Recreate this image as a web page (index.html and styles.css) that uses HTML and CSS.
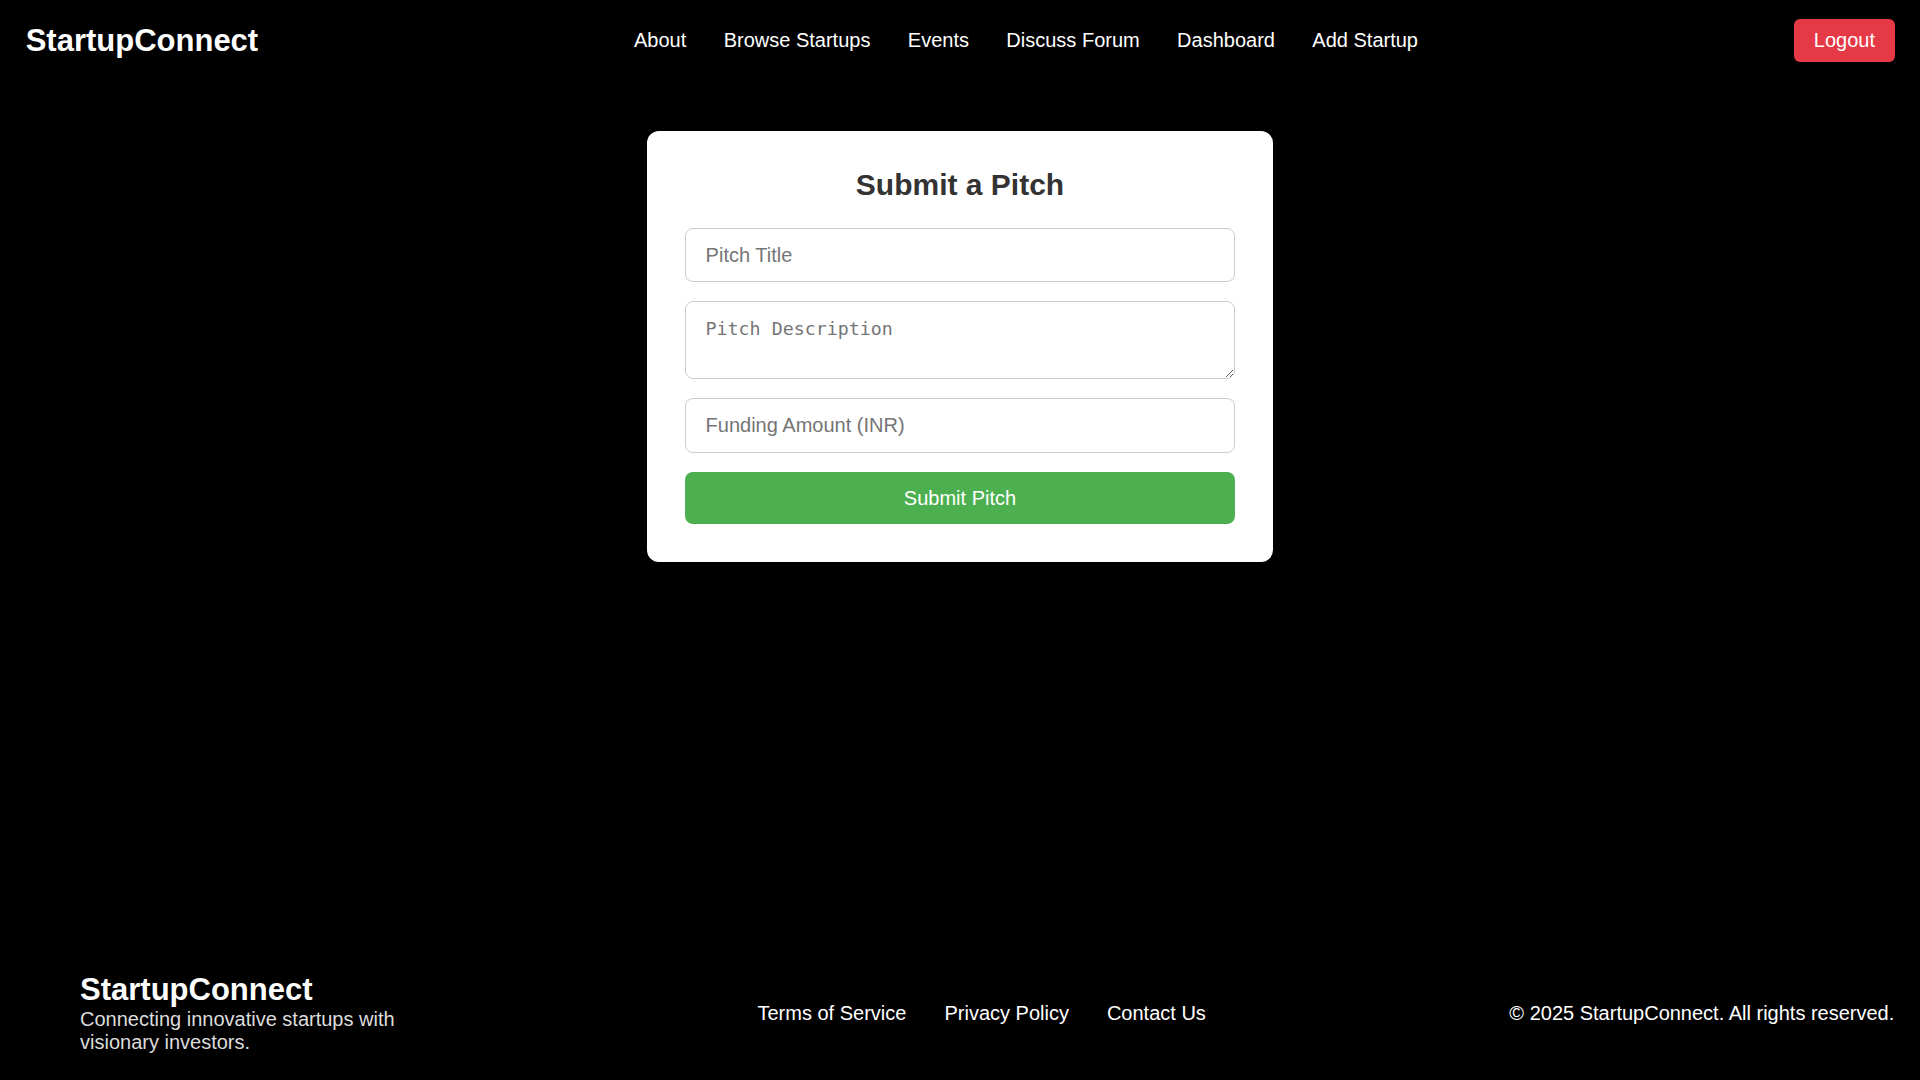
FILE: index.html
```html
<!DOCTYPE html>
<html lang="en">
<head>
<meta charset="UTF-8">
<title>Submit a Pitch - StartupConnect</title>
<link rel="stylesheet" href="styles.css">
</head>
<body>
  <header class="navbar">
    <div class="logo">StartupConnect</div>
    <nav class="nav-links">
      <a href="#">About</a>
      <a href="#">Browse Startups</a>
      <a href="#">Events</a>
      <a href="#">Discuss Forum</a>
      <a href="#">Dashboard</a>
      <a href="#">Add Startup</a>
    </nav>
    <button class="logout-btn" type="button">Logout</button>
  </header>

  <main class="main">
    <div class="pitch-card">
      <h2 class="pitch-title">Submit a Pitch</h2>
      <form class="pitch-form">
        <input class="field" type="text" placeholder="Pitch Title">
        <textarea class="field field-area" placeholder="Pitch Description"></textarea>
        <input class="field" type="number" placeholder="Funding Amount (INR)">
        <button class="submit-btn" type="button">Submit Pitch</button>
      </form>
    </div>
  </main>

  <footer class="footer">
    <div class="footer-brand">
      <div class="footer-logo">StartupConnect</div>
      <p class="footer-tagline">Connecting innovative startups with visionary investors.</p>
    </div>
    <div class="footer-links">
      <a href="#">Terms of Service</a>
      <a href="#">Privacy Policy</a>
      <a href="#">Contact Us</a>
    </div>
    <div class="footer-copy">© 2025 StartupConnect. All rights reserved.</div>
  </footer>
</body>
</html>
```
FILE: styles.css
```css
* {
  box-sizing: border-box;
}

html, body {
  margin: 0;
  padding: 0;
}

body {
  background: #000;
  color: #fff;
  font-family: "Liberation Sans", Arial, Helvetica, sans-serif;
  min-height: 100vh;
  display: flex;
  flex-direction: column;
}

a {
  color: #fff;
  text-decoration: none;
}

/* Navbar */
.navbar {
  display: flex;
  align-items: center;
  justify-content: space-between;
  padding: 19px 25px 19px 25.7px;
}

.logo {
  font-size: 31px;
  font-weight: bold;
  color: #fff;
}

.nav-links {
  display: flex;
  gap: 37.4px;
  font-size: 20px;
}

.logout-btn {
  background: #e63946;
  color: #fff;
  border: none;
  border-radius: 6px;
  padding: 10px 20px;
  font-family: inherit;
  font-size: 20px;
  line-height: 23px;
  cursor: pointer;
}

/* Main */
.main {
  flex: 1;
  padding-top: 50px;
}

.pitch-card {
  width: 625.4px;
  margin: 0 auto;
  background: #fff;
  border-radius: 12px;
  padding: 37px 37.8px 38px;
}

.pitch-title {
  margin: 0 0 26px;
  text-align: center;
  color: #333;
  font-size: 30px;
  font-weight: bold;
}

.pitch-form {
  display: flex;
  flex-direction: column;
  gap: 19px;
}

.field {
  width: 100%;
  height: 54.4px;
  border: 1px solid #ccc;
  border-radius: 8px;
  padding: 15px 19.5px;
  font-family: "Liberation Sans", Arial, sans-serif;
  font-size: 20px;
  color: #333;
  background: #fff;
  outline: none;
}

.field::placeholder {
  color: #757575;
}

.field-area {
  height: 78px;
  font-family: "DejaVu Sans Mono", "Liberation Mono", monospace;
  font-size: 18.3px;
  line-height: 23px;
  padding: 15px 19.5px;
  resize: vertical;
}

.submit-btn {
  width: 100%;
  height: 52.7px;
  background: #4caf50;
  color: #fff;
  border: none;
  border-radius: 8px;
  font-family: inherit;
  font-size: 20px;
  cursor: pointer;
}

/* Footer */
.footer {
  display: flex;
  align-items: center;
  justify-content: space-between;
  padding: 26px 25.7px 26px 80px;
}

.footer-brand {
  width: 374px;
}

.footer-logo {
  font-size: 31px;
  font-weight: bold;
  color: #fff;
}

.footer-tagline {
  margin: 0;
  font-size: 20px;
  line-height: 23px;
  color: #ddd;
}

.footer-links {
  display: flex;
  gap: 38px;
  font-size: 20px;
}

.footer-copy {
  font-size: 20px;
  color: #fff;
}
```
